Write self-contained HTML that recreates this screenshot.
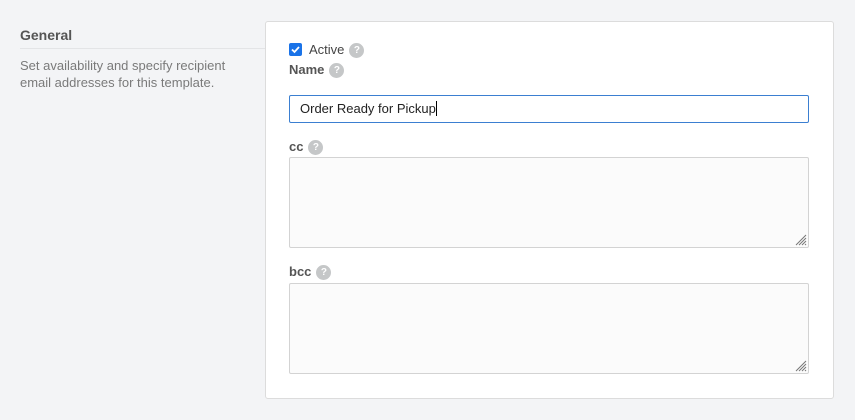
<!DOCTYPE html>
<html><head><style>
body{margin:0;width:855px;height:420px;background:#f3f4f6;font-family:"Liberation Sans",sans-serif;position:relative;overflow:hidden}
.a{position:absolute}
.h{left:20px;top:27px;font-size:14px;font-weight:bold;color:#555}
.ln{left:20px;top:48px;width:245px;height:1px;background:#e3e4e6}
.d{left:20px;top:57px;font-size:13px;line-height:17px;color:#7a7a7a}
.card{left:265px;top:21px;width:567px;height:376px;background:#fff;border:1px solid #dcdcdc;border-radius:3px}
.lb{font-size:13px;font-weight:bold;color:#555;line-height:16px;display:flex;align-items:center}
.q{display:inline-block;width:15px;height:15px;border-radius:50%;background:#c5c7c8;color:#fff;font-size:10px;line-height:15px;text-align:center;margin-left:5px;font-weight:bold}
.ta{left:289px;width:518px;height:89px;border:1px solid #d3d3d3;background:#fbfbfb;border-radius:2px}
.ta svg{position:absolute;right:1px;bottom:1px}
</style></head><body>
<div class="a h">General</div>
<div class="a ln"></div>
<div class="a d">Set availability and specify recipient<br>email addresses for this template.</div>
<div class="a card"></div>
<div class="a" style="left:289px;top:43px;width:13px;height:13px;background:#1a73e8;border-radius:2px">
<svg width="13" height="13"><path d="M3 6.5l2.5 2.5 4.5-5" stroke="#fff" stroke-width="1.8" fill="none"/></svg></div>
<div class="a lb" style="left:309px;top:42px;font-weight:normal;color:#444">Active<span class="q">?</span></div>
<div class="a lb" style="left:289px;top:62px">Name<span class="q">?</span></div>
<div class="a" style="left:289px;top:95px;width:518px;height:26px;border:1px solid #3b7fd1;border-radius:2px;font-size:13px;line-height:26px;color:#222;box-sizing:content-box"><span style="padding-left:10px">Order Ready for Pickup</span><span style="display:inline-block;width:1px;height:15px;background:#000;vertical-align:-3px"></span></div>
<div class="a lb" style="left:289px;top:139px">cc<span class="q">?</span></div>
<div class="a ta" style="top:157px"><svg width="12" height="12"><path d="M11 1L1 11M11 4L4 11M11 7L7 11M11 10L10 11" stroke="#777" stroke-width="1"/></svg></div>
<div class="a lb" style="left:289px;top:264px">bcc<span class="q">?</span></div>
<div class="a ta" style="top:283px"><svg width="12" height="12"><path d="M11 1L1 11M11 4L4 11M11 7L7 11M11 10L10 11" stroke="#777" stroke-width="1"/></svg></div>
</body></html>
